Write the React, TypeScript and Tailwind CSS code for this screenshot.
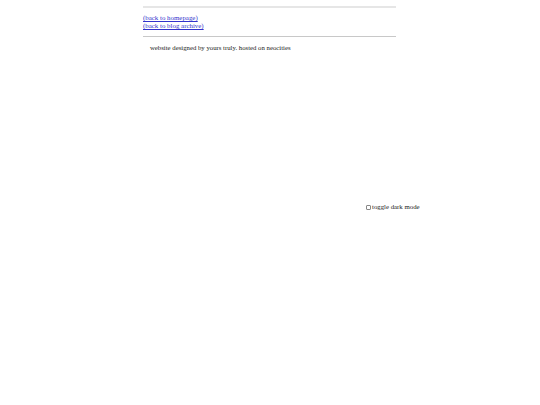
export default function App() {
  return (
    <div className="min-h-[405px] w-[540px] bg-white font-['Liberation_Serif',serif] text-black">
      <div className="ml-[143px] w-[253px] pt-[6px]">
        <div className="h-[2px] bg-[#e6e6e6]" />
        <div className="mt-[6px] flex flex-col text-[6.9px] leading-[8px]">
          <a href="#" className="text-[#3333cc] underline">(back to homepage)</a>
          <a href="#" className="text-[#3333cc] underline">(back to blog archive)</a>
        </div>
        <div className="mt-[6px] h-[1px] bg-[#c8c8c8]" />
        <p className="mt-[7px] pl-[7px] text-[6.75px] leading-[8px] text-[#222]">
          website designed by yours truly. hosted on neocities
        </p>
      </div>
      <div className="ml-[366px] mt-[151px] flex items-center gap-[1px] text-[6.8px] leading-[8px] text-[#222]">
        <input type="checkbox" className="h-[5px] w-[5px] appearance-none rounded-[1px] border border-[#888] bg-white" />
        <span>toggle dark mode</span>
      </div>
    </div>
  );
}
